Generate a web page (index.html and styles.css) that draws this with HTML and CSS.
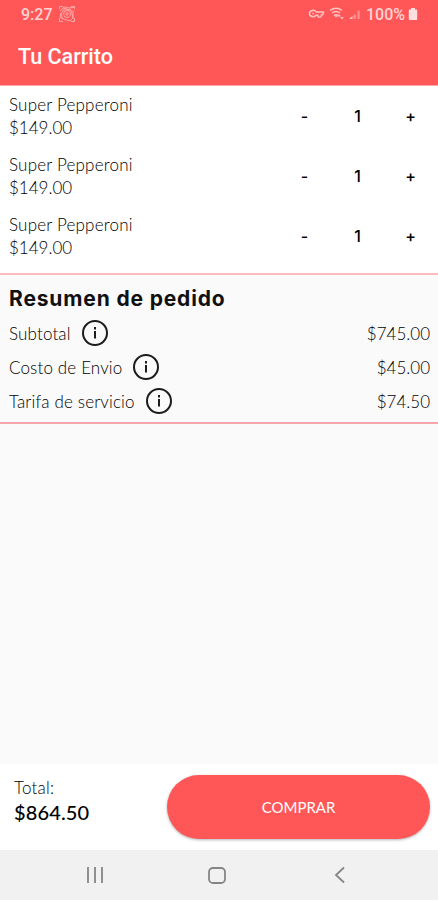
FILE: index.html
```
<!DOCTYPE html>
<html lang="es">
<head>
    <meta charset="UTF-8">
    <meta name="viewport" content="width=device-width, initial-scale=1.0">
    <title>Tu Carrito</title>
    <link rel="stylesheet" href="styles.css">
</head>
<body>

    <header class="header">
        <div class="status-bar">
            <span class="time">9:27</span>
            <svg class="app-icon" width="18" height="18" viewBox="0 0 18 18">
                <path d="M1.500 4V1.500H5M13 1.500h3.500V4M1.500 13v3.500H5M13 16.500h3.500V13M2 6l4-4 6 1 4-1M2 12l3-7 8 0 2 8-3 3-7-2zM2 8l3 6M15 5v8M5 3l8 2"/>
                <circle cx="9" cy="9" r="3.500"/>
                <circle cx="9" cy="9" r="1.200"/>
            </svg>
            <svg class="status-icons" width="54" height="18" viewBox="0 0 54 18">
                <g class="line">
                    <path d="M8 7C6.800 4.500 1.500 4.800 1.500 8.500S6.800 12.500 8 10.200h1.800q0 2 1.800 2T13.400 10q2.100 0 2.100-3H8"/>
                    <path d="M6 8.500H4.500"/>
                    <path d="M22 5.500q6-4.500 12 0M24 8q4-3 8 0M26 10.500q2-1.500 4 0"/>
                </g>
                <path class="fill" d="M26.500 10.500h3L28 13zM31 9l1.800 2.500h-3.600zM34 14.500L32.200 12h3.600z"/>
                <path class="fill" d="M41 14l3.500-3V14z"/>
                <path class="dim" d="M45.500 14V9.500h2.200V14zM49.500 14V5.500h2.200V14z"/>
            </svg>
            <span class="percent">100%</span>
            <svg class="battery" width="10" height="14" viewBox="0 0 10 14">
                <path d="M3 1h4v1.500h1.500q.7 0 .7.7v9q0 .8-.7.8h-7q-.7 0-.7-.8v-9q0-.7.7-.7H3z"/>
            </svg>
        </div>
        <h1 class="title">Tu Carrito</h1>
    </header>

    <main class="content">
        <ul class="items">
            <li class="item">
                <div class="item-info">
                    <span class="item-name">Super Pepperoni</span>
                    <span class="item-price">$149.00</span>
                </div>
                <div class="quantity">
                    <button class="qty-button">-</button>
                    <span class="qty">1</span>
                    <button class="qty-button">+</button>
                </div>
            </li>
            <li class="item">
                <div class="item-info">
                    <span class="item-name">Super Pepperoni</span>
                    <span class="item-price">$149.00</span>
                </div>
                <div class="quantity">
                    <button class="qty-button">-</button>
                    <span class="qty">1</span>
                    <button class="qty-button">+</button>
                </div>
            </li>
            <li class="item">
                <div class="item-info">
                    <span class="item-name">Super Pepperoni</span>
                    <span class="item-price">$149.00</span>
                </div>
                <div class="quantity">
                    <button class="qty-button">-</button>
                    <span class="qty">1</span>
                    <button class="qty-button">+</button>
                </div>
            </li>
        </ul>

        <section class="summary">
            <h2 class="summary-title">Resumen de pedido</h2>
            <div class="summary-row">
                <span class="label">Subtotal</span>
                <svg class="info" width="28" height="28" viewBox="0 0 28 28">
                    <circle cx="14" cy="14" r="12"/>
                    <path d="M14 12v7.500M14 8v2.400"/>
                </svg>
                <span class="amount">$745.00</span>
            </div>
            <div class="summary-row">
                <span class="label">Costo de Envio</span>
                <svg class="info" width="28" height="28" viewBox="0 0 28 28">
                    <circle cx="14" cy="14" r="12"/>
                    <path d="M14 12v7.500M14 8v2.400"/>
                </svg>
                <span class="amount">$45.00</span>
            </div>
            <div class="summary-row">
                <span class="label">Tarifa de servicio</span>
                <svg class="info" width="28" height="28" viewBox="0 0 28 28">
                    <circle cx="14" cy="14" r="12"/>
                    <path d="M14 12v7.500M14 8v2.400"/>
                </svg>
                <span class="amount">$74.50</span>
            </div>
        </section>
    </main>

    <footer class="checkout">
        <div class="total">
            <span class="total-label">Total:</span>
            <span class="total-amount">$864.50</span>
        </div>
        <button class="buy">COMPRAR</button>
    </footer>

    <nav class="nav-bar">
        <svg width="20" height="20" viewBox="0 0 20 20">
            <path d="M4 2v16M11 2v16M18 2v16"/>
        </svg>
        <svg width="20" height="20" viewBox="0 0 20 20">
            <rect x="2" y="3" width="16" height="15" rx="4"/>
        </svg>
        <svg width="20" height="20" viewBox="0 0 20 20">
            <path d="M14 2.500L6 10l8 7.500"/>
        </svg>
    </nav>

</body>
</html>
```

FILE: styles.css
```
* {
    box-sizing: border-box;
}
body {
    margin: 0;
    height: 900px;
    display: flex;
    flex-direction: column;
    font-family: Lato, sans-serif;
    background-color: #fafafa;
    color: #000;
    overflow: hidden;
}
button {
    border: none;
    padding: 0;
    cursor: pointer;
}
.header {
    height: 85px;
    background-color: #ff5757;
    box-shadow: 0 1px 0 #ffa5a5;
    font-family: Roboto, sans-serif;
    position: relative;
}
.status-bar {
    display: flex;
    align-items: center;
    height: 28px;
    padding: 0 20px 0 21px;
    color: #ffd3d3;
    font-size: 16px;
    font-weight: 500;
}
.app-icon {
    margin-left: 5px;
    fill: none;
    stroke: #ffa8a8;
    stroke-width: 1;
}
.status-icons {
    margin-left: auto;
    margin-right: 4px;
}
.line {
    fill: none;
    stroke: #ffc4c4;
    stroke-width: 1.5;
}
.fill {
    fill: #ffc4c4;
}
.dim {
    fill: #ff9292;
}
.battery {
    margin-left: 3px;
    fill: #ffe0e0;
}
.title {
    margin: 0;
    padding: 15px 18px 0;
    color: #fff;
    font-size: 21.5px;
    line-height: 28px;
    font-weight: 500;
}
.content {
    flex: 1;
}
.items {
    margin: 0;
    padding: 0 0 8px;
    height: 188px;
    list-style: none;
    background-color: #fff;
}
.item {
    display: flex;
    justify-content: space-between;
    height: 60px;
    padding: 8px 1px 0 9px;
}
.item-info {
    display: flex;
    flex-direction: column;
    font-size: 17px;
    line-height: 23px;
    font-weight: 300;
}
.item-name {
    letter-spacing: 0.2px;
}
.quantity {
    display: grid;
    grid-template-columns: repeat(3, 53px);
    height: 46px;
    align-items: center;
    text-align: center;
    color: #000;
    font-family: Inter, sans-serif;
    font-size: 16px;
    font-weight: 500;
}
.qty-button {
    background: none;
    color: #000;
    font: inherit;
}
.summary {
    height: 151px;
    padding: 11px 8px 0 9px;
    border-top: 2px solid #fdbcbf;
    border-bottom: 2px solid #f9a5a9;
}
.summary-title {
    margin: 0 0 4px;
    color: #111;
    font-family: Inter, sans-serif;
    font-size: 21px;
    line-height: 26px;
    font-weight: 700;
    letter-spacing: 0.85px;
}
.summary-row {
    display: flex;
    align-items: center;
    height: 34px;
    font-size: 17px;
    font-weight: 300;
}
.label {
    letter-spacing: 0.15px;
}
.info {
    margin-left: 10px;
    fill: none;
    stroke: #1c1c1c;
    stroke-width: 2;
}
.amount {
    margin-left: auto;
}
.checkout {
    display: flex;
    justify-content: space-between;
    height: 86px;
    padding: 11px 8px 0 14px;
    background-color: #fff;
}
.total {
    display: flex;
    flex-direction: column;
}
.total-label {
    font-size: 17px;
    line-height: 25px;
    font-weight: 300;
    letter-spacing: 0.2px;
}
.total-amount {
    color: #000;
    font-size: 20px;
    line-height: 25px;
    font-weight: 500;
    letter-spacing: 0.15px;
}
.buy {
    width: 263px;
    height: 64px;
    border-radius: 32px;
    background-color: #ff5757;
    box-shadow: 0 1px 3px rgba(0, 0, 0, 0.3);
    color: #fff;
    font-family: Lato, sans-serif;
    font-size: 15px;
}
.nav-bar {
    display: flex;
    gap: 103px;
    height: 50px;
    padding: 15px 0 0 84px;
    background-color: #f1f1f1;
}
.nav-bar svg {
    fill: none;
    stroke: #858585;
    stroke-width: 1.8;
}
```
